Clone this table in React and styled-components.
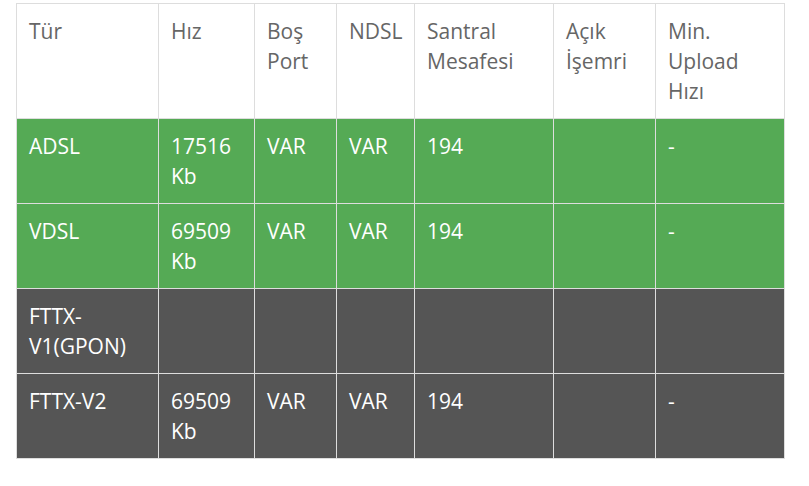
import React from 'react'
import styled, { createGlobalStyle } from 'styled-components'

const GlobalStyle = createGlobalStyle`
    body {
        margin: 0;
        background: #fff;
        font-family: "Open Sans", "Noto Sans", sans-serif;
    }
`;

const Wrapper = styled.div`
    padding: 3px 0 0 16px;
`;

const Table = styled.table`
    border-collapse: collapse;
    table-layout: fixed;
    width: 769px;
    font-size: 21px;
    line-height: 30px;
`;

const HeadCell = styled.th`
    text-align: left;
    vertical-align: top;
    font-weight: 400;
    color: #666;
    padding: 12px;
    border: 1px solid #ddd;
    background: #fff;
`;

const Row = styled.tr`
    background: ${(p) => (p.$tone === 'green' ? '#55aa55' : '#555555')};
`;

const Cell = styled.td`
    vertical-align: top;
    color: #fff;
    padding: 12px;
    border: 1px solid #ddd;
    height: 60px;
`;

const columns = [
    { label: 'Tür', width: 142 },
    { label: 'Hız', width: 96 },
    { label: 'Boş Port', width: 82 },
    { label: 'NDSL', width: 78 },
    { label: 'Santral Mesafesi', width: 139 },
    { label: 'Açık İşemri', width: 102 },
    { label: 'Min. Upload Hızı', width: 129 },
];

const rows = [
    { tone: 'green', cells: ['ADSL', '17516 Kb', 'VAR', 'VAR', '194', '', '-'] },
    { tone: 'green', cells: ['VDSL', '69509 Kb', 'VAR', 'VAR', '194', '', '-'] },
    { tone: 'dark', cells: ['FTTX-V1(GPON)', '', '', '', '', '', ''] },
    { tone: 'dark', cells: ['FTTX-V2', '69509 Kb', 'VAR', 'VAR', '194', '', '-'] },
];

export default function App() {
    return (
        <Wrapper>
            <GlobalStyle />
            <Table>
                <colgroup>
                    {columns.map((c) => <col key={c.label} style={{ width: c.width }} />)}
                </colgroup>
                <thead>
                    <tr>
                        {columns.map((c) => <HeadCell key={c.label}>{c.label}</HeadCell>)}
                    </tr>
                </thead>
                <tbody>
                    {rows.map((r, i) => (
                        <Row key={i} $tone={r.tone}>
                            {r.cells.map((v, j) => <Cell key={j}>{v}</Cell>)}
                        </Row>
                    ))}
                </tbody>
            </Table>
        </Wrapper>
    )
}
